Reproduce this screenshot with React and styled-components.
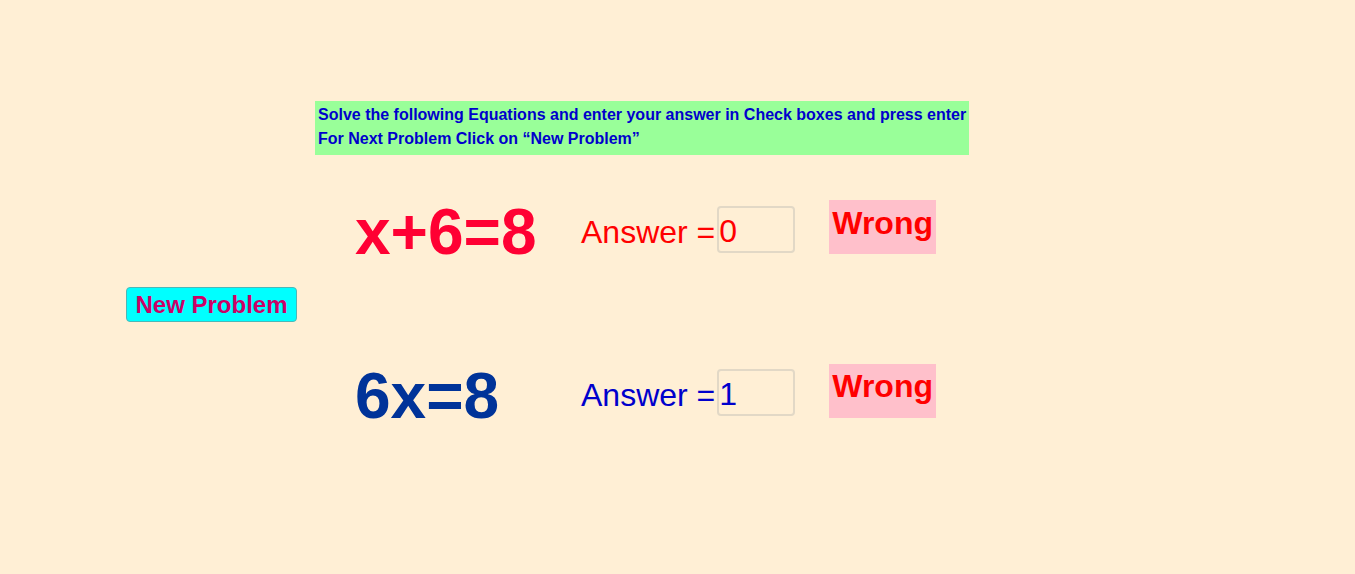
import React from 'react';
import styled, { createGlobalStyle } from 'styled-components';

const GlobalStyle = createGlobalStyle`
  html, body {
    margin: 0;
    padding: 0;
    background: #ffefd5;
    font-family: "Liberation Sans", Arial, sans-serif;
  }
`;

const Page = styled.div`
  width: 1355px;
  height: 574px;
  box-sizing: border-box;
  padding-top: 101px;
  background: #ffefd5;
  overflow: hidden;
`;

const Instructions = styled.div`
  width: 654px;
  height: 54px;
  box-sizing: border-box;
  margin-left: 315px;
  padding: 2px 3px;
  background: #99ff99;
  color: #0000cc;
  font-size: 16px;
  font-weight: bold;
  line-height: 24px;
  white-space: nowrap;
`;

const Board = styled.div`
  display: grid;
  grid-template-columns: 355px auto;
  margin-top: 45px;
`;

const NewProblemButton = styled.button`
  align-self: start;
  justify-self: start;
  margin: 87px 0 0 126px;
  width: 171px;
  height: 35px;
  padding: 0;
  border: 1px solid #4cb8b8;
  border-radius: 4px;
  background: #00ffff;
  color: #cc0066;
  font-family: "Liberation Sans", Arial, sans-serif;
  font-size: 24px;
  font-weight: bold;
  cursor: pointer;
`;

const Rows = styled.div`
  display: flex;
  flex-direction: column;
  gap: 100px;
`;

const Row = styled.div`
  display: flex;
  align-items: flex-start;
`;

const Equation = styled.div`
  width: 226px;
  color: ${({ color }) => color};
  font-size: 64px;
  font-weight: bold;
  line-height: 64px;
  white-space: nowrap;
`;

const AnswerLabel = styled.span`
  margin-top: ${({ offset }) => offset}px;
  color: ${({ color }) => color};
  font-size: 32px;
  line-height: 32px;
  white-space: nowrap;
`;

const AnswerInput = styled.input`
  width: 78px;
  height: 47px;
  box-sizing: border-box;
  margin: ${({ offset }) => offset}px 0 0 2px;
  padding: 4px 0 0 0;
  border: 2px solid #e2d8c6;
  border-radius: 4px;
  background: transparent;
  color: ${({ color }) => color};
  font-family: "Liberation Sans", Arial, sans-serif;
  font-size: 32px;
  outline: none;
`;

const Verdict = styled.div`
  margin-left: 34px;
  padding: ${({ top }) => top}px 3px 0;
  height: 54px;
  box-sizing: border-box;
  background: #ffc0cb;
  color: #ff0000;
  font-size: 32px;
  font-weight: bold;
  line-height: 32px;
`;

const problems = [
  { eq: 'x+6=8', eqColor: '#ff0033', color: '#ff0000', value: '0', label: 16, input: 6, verdict: 7 },
  { eq: '6x=8', eqColor: '#003399', color: '#0000cc', value: '1', label: 15, input: 5, verdict: 6 },
];

export default function App() {
  return (
    <Page>
      <GlobalStyle />
      <Instructions>
        Solve the following Equations and enter your answer in Check boxes and press enter
        <br />
        For Next Problem Click on “New Problem”
      </Instructions>
      <Board>
        <NewProblemButton>New Problem</NewProblemButton>
        <Rows>
          {problems.map((p) => (
            <Row key={p.eq}>
              <Equation color={p.eqColor}>{p.eq}</Equation>
              <AnswerLabel color={p.color} offset={p.label}>Answer =</AnswerLabel>
              <AnswerInput color={p.color} offset={p.input} defaultValue={p.value} />
              <Verdict top={p.verdict}>Wrong</Verdict>
            </Row>
          ))}
        </Rows>
      </Board>
    </Page>
  );
}
